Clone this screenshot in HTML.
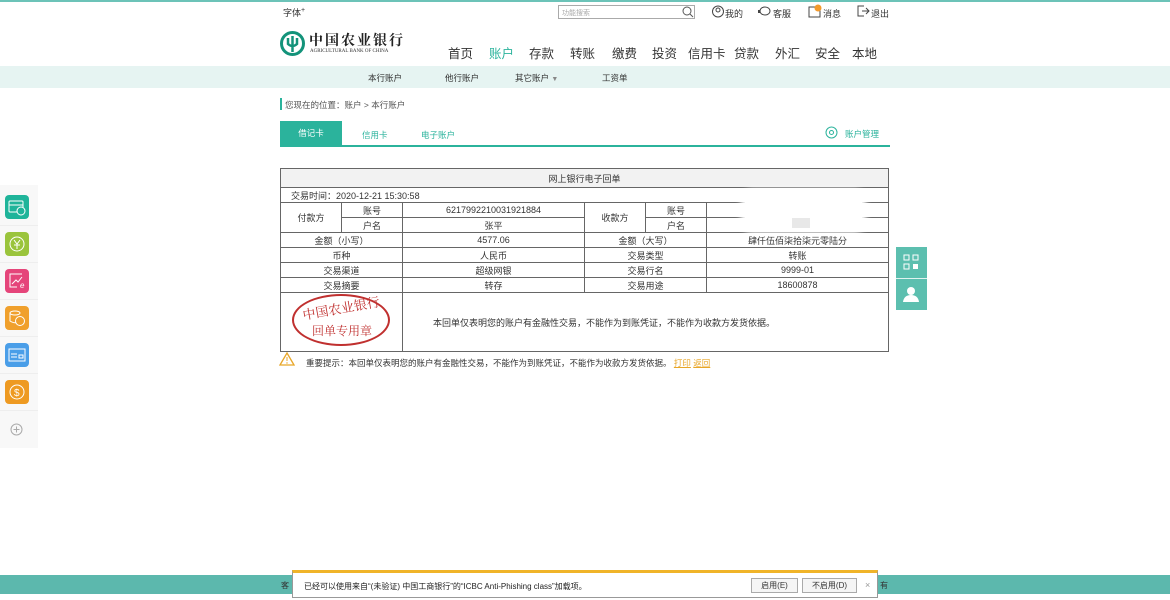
<!DOCTYPE html>
<html><head><meta charset="utf-8"><style>
*{margin:0;padding:0;box-sizing:border-box}
body{width:1170px;height:600px;position:relative;background:#fff;font-family:"Liberation Sans","Noto Sans CJK SC",sans-serif;color:#333;overflow:hidden;font-size:9px}
.a{position:absolute;white-space:nowrap}
table{position:absolute;left:280px;top:168px;width:609px;border-collapse:collapse;font-size:9px}
td{border:1px solid #666;text-align:center;height:15px;padding:0}
.nav span{position:absolute;top:43px;font-size:12.5px;color:#333}
.sub span{position:absolute;top:72px;font-size:8.5px;color:#333}
.side{position:absolute;left:5px;width:24px;height:24px;border-radius:4px}
.side svg{position:absolute;left:3px;top:3px}
.sep{position:absolute;left:0;width:38px;height:1px;background:#eee}
</style></head><body>
<div class="a" style="left:0;top:0;width:1170px;height:2px;background:#6cc3b8"></div>
<div class="a" style="left:283px;top:6px;font-size:9px">字体<sup style="font-size:7px">+</sup></div>
<div class="a" style="left:558px;top:5px;width:137px;height:14px;border:1px solid #aaa;font-size:7px;color:#aaa;padding:2px 3px">功能搜索</div>
<svg class="a" style="left:682px;top:6px" width="12" height="12"><circle cx="5" cy="5" r="4" fill="none" stroke="#555"/><line x1="8" y1="8" x2="11" y2="11" stroke="#555"/></svg>
<svg class="a" style="left:712px;top:5px" width="12" height="13"><circle cx="6" cy="6.5" r="5.5" fill="none" stroke="#444"/><circle cx="6" cy="5" r="2" fill="none" stroke="#444"/></svg>
<div class="a" style="left:725px;top:7px;font-size:9px">我的</div>
<svg class="a" style="left:758px;top:6px" width="14" height="11"><ellipse cx="7" cy="5" rx="5" ry="4" fill="none" stroke="#444"/><rect x="0" y="4" width="2" height="3" fill="#444"/></svg>
<div class="a" style="left:773px;top:7px;font-size:9px">客服</div>
<svg class="a" style="left:808px;top:4px" width="14" height="14"><rect x="1" y="3" width="11" height="10" fill="none" stroke="#444"/><circle cx="10" cy="4" r="3.5" fill="#f39a2c"/></svg>
<div class="a" style="left:823px;top:7px;font-size:9px">消息</div>
<svg class="a" style="left:857px;top:5px" width="13" height="12"><path d="M7 1H1V11H7M5 6H12M9 3L12 6L9 9" fill="none" stroke="#444"/></svg>
<div class="a" style="left:871px;top:7px;font-size:9px">退出</div>
<svg class="a" style="left:280px;top:31px" width="25" height="25"><circle cx="12.5" cy="12.5" r="11" fill="none" stroke="#13937a" stroke-width="3"/><path d="M12.5 5V21M8 7V13Q12.5 17 17 13V7" fill="none" stroke="#13937a" stroke-width="2.5"/></svg>
<div class="a" style="left:309px;top:30px;font-size:14px;font-weight:bold;font-family:'Noto Serif CJK SC',serif;color:#222;letter-spacing:2px">中国农业银行</div>
<div class="a" style="left:310px;top:49px;font-size:5px;font-family:'Liberation Serif',serif;color:#333">AGRICULTURAL BANK OF CHINA</div>
<div class="nav"><span style="left:448px">首页</span><span style="left:489px;color:#2bb39c">账户</span><span style="left:529px">存款</span><span style="left:570px">转账</span><span style="left:612px">缴费</span><span style="left:652px">投资</span><span style="left:688px">信用卡</span><span style="left:734px">贷款</span><span style="left:775px">外汇</span><span style="left:815px">安全</span><span style="left:852px">本地</span></div>
<div class="a" style="left:0;top:66px;width:1170px;height:22px;background:#e6f4f2"></div>
<div class="sub"><span style="left:368px">本行账户</span><span style="left:445px">他行账户</span><span style="left:515px">其它账户 <span style="color:#888;font-size:7px;position:static">▼</span></span><span style="left:602px">工资单</span></div>
<div class="a" style="left:280px;top:98px;width:2px;height:12px;background:#2bb39c"></div>
<div class="a" style="left:285px;top:99px;font-size:8.5px;color:#555">您现在的位置：账户 &gt; 本行账户</div>
<div class="a" style="left:280px;top:121px;width:62px;height:24px;background:#2bb39c;color:#fff;font-size:8.5px;text-align:center;line-height:24px">借记卡</div>
<div class="a" style="left:362px;top:129px;font-size:8.5px;color:#2bb39c">信用卡</div>
<div class="a" style="left:421px;top:129px;font-size:8.5px;color:#2bb39c">电子账户</div>
<svg class="a" style="left:825px;top:126px" width="13" height="13"><circle cx="6.5" cy="6.5" r="5.5" fill="none" stroke="#2bb39c"/><circle cx="6.5" cy="6.5" r="2" fill="none" stroke="#2bb39c"/></svg>
<div class="a" style="left:845px;top:128px;font-size:8.5px;color:#2bb39c">账户管理</div>
<div class="a" style="left:280px;top:145px;width:610px;height:2px;background:#2bb39c"></div>
<table>
<tr><td colspan="6" style="background:#f2f2f2;height:19px">网上银行电子回单</td></tr>
<tr><td colspan="6" style="text-align:left;padding-left:10px">交易时间：2020-12-21 15:30:58</td></tr>
<tr><td rowspan="2" style="width:61px">付款方</td><td style="width:61px;height:14px">账号</td><td style="width:182px">6217992210031921884</td><td rowspan="2" style="width:61px">收款方</td><td style="width:61px">账号</td><td></td></tr>
<tr><td style="height:14px">户名</td><td>张平</td><td>户名</td><td></td></tr>
<tr><td colspan="2">金额（小写）</td><td>4577.06</td><td colspan="2">金额（大写）</td><td>肆仟伍佰柒拾柒元零陆分</td></tr>
<tr><td colspan="2">币种</td><td>人民币</td><td colspan="2">交易类型</td><td>转账</td></tr>
<tr><td colspan="2">交易渠道</td><td>超级网银</td><td colspan="2">交易行名</td><td>9999-01</td></tr>
<tr><td colspan="2">交易摘要</td><td>转存</td><td colspan="2">交易用途</td><td>18600878</td></tr>
<tr><td colspan="2" style="height:59px;position:relative"></td><td colspan="4" style="text-align:left;padding-left:30px">本回单仅表明您的账户有金融性交易，不能作为到账凭证，不能作为收款方发货依据。</td></tr>
</table>
<div class="a" style="left:745px;top:193px;width:117px;height:36px;background:#fff;border-radius:8px;box-shadow:0 0 6px 4px #fff"></div>
<div class="a" style="left:792px;top:218px;width:18px;height:10px;background:#e8e8e8"></div>
<div class="a" style="left:292px;top:294px;width:98px;height:52px;border:2px solid #c0302f;border-radius:50%"></div>
<div class="a" style="left:302px;top:298px;font-size:13px;color:#c0302f;font-family:'Noto Serif CJK SC',serif;transform:rotate(-10deg)">中国农业银行</div>
<div class="a" style="left:312px;top:322px;font-size:12px;color:#c0302f;font-family:'Noto Serif CJK SC',serif">回单专用章</div>
<svg class="a" style="left:279px;top:352px" width="16" height="14"><path d="M8 1L15 13H1Z" fill="none" stroke="#e8a628" stroke-width="1.3"/><line x1="8" y1="5" x2="8" y2="9" stroke="#e8a628"/><circle cx="8" cy="11" r=".7" fill="#e8a628"/></svg>
<div class="a" style="left:306px;top:357px;font-size:8.5px;color:#333">重要提示：本回单仅表明您的账户有金融性交易，不能作为到账凭证，不能作为收款方发货依据。 <span style="color:#e8a628;text-decoration:underline">打印</span> <span style="color:#e8a628;text-decoration:underline">返回</span></div>
<div class="a" style="left:0;top:185px;width:38px;height:263px;background:#f8f8f8"></div>
<div class="side" style="top:195px;background:#1fb49a"><svg width="18" height="18"><rect x="1" y="3" width="14" height="11" rx="1" fill="none" stroke="#fff"/><line x1="1" y1="7" x2="15" y2="7" stroke="#fff"/><circle cx="13" cy="13" r="4" fill="#1fb49a" stroke="#fff"/></svg></div>
<div class="sep" style="top:225px"></div>
<div class="side" style="top:232px;background:#9ac43c"><svg width="18" height="18"><circle cx="9" cy="9" r="7" fill="none" stroke="#fff"/><path d="M6 5L9 9L12 5M9 9V14M6 10H12" fill="none" stroke="#fff"/></svg></div>
<div class="sep" style="top:262px"></div>
<div class="side" style="top:269px;background:#e5457a"><svg width="18" height="18"><path d="M14 2H2V15H9" fill="none" stroke="#fff"/><path d="M4 12L8 8L10 10L14 5" fill="none" stroke="#fff"/><text x="12" y="16" font-size="8" fill="#fff" font-style="italic">e</text></svg></div>
<div class="sep" style="top:299px"></div>
<div class="side" style="top:306px;background:#f0a02c"><svg width="18" height="18"><ellipse cx="7" cy="4" rx="5" ry="2" fill="none" stroke="#fff"/><path d="M2 4V12Q7 15 9 13" fill="none" stroke="#fff"/><circle cx="12" cy="12" r="4.5" fill="#f0a02c" stroke="#fff"/></svg></div>
<div class="sep" style="top:336px"></div>
<div class="side" style="top:343px;background:#4a9ee8"><svg width="18" height="18"><rect x="1" y="3" width="16" height="12" fill="none" stroke="#fff"/><line x1="3" y1="8" x2="9" y2="8" stroke="#fff"/><line x1="3" y1="11" x2="9" y2="11" stroke="#fff"/><rect x="11" y="9" width="4" height="3" fill="none" stroke="#fff"/></svg></div>
<div class="sep" style="top:373px"></div>
<div class="side" style="top:380px;background:#ee9a22"><svg width="18" height="18"><circle cx="9" cy="9" r="7" fill="none" stroke="#fff"/><text x="6" y="13" font-size="10" fill="#fff">$</text></svg></div>
<div class="sep" style="top:410px"></div>
<svg class="a" style="left:10px;top:423px" width="13" height="13"><circle cx="6.5" cy="6.5" r="5.5" fill="none" stroke="#aaa"/><path d="M6.5 3.5V9.5M3.5 6.5H9.5" stroke="#aaa"/></svg>
<div class="a" style="left:896px;top:247px;width:31px;height:63px;background:#5cbfaf"></div>
<div class="a" style="left:896px;top:278px;width:31px;height:1px;background:#e0f3f0"></div>
<svg class="a" style="left:903px;top:254px" width="16" height="16"><rect x="1" y="1" width="5" height="5" fill="none" stroke="#fff"/><rect x="10" y="1" width="5" height="5" fill="none" stroke="#fff"/><rect x="1" y="10" width="5" height="5" fill="none" stroke="#fff"/><rect x="10" y="10" width="5" height="5" fill="#fff"/></svg>
<svg class="a" style="left:902px;top:285px" width="18" height="17"><circle cx="9" cy="6" r="4" fill="#fff"/><path d="M1 17Q2 10 9 10Q16 10 17 17Z" fill="#fff"/></svg>
<div class="a" style="left:0;top:575px;width:1170px;height:19px;background:#5cb8ad"></div>
<div class="a" style="left:281px;top:580px;font-size:8px;color:#333">客</div>
<div class="a" style="left:880px;top:580px;font-size:8px;color:#333">有</div>
<div class="a" style="left:292px;top:570px;width:586px;height:28px;background:#fff;border:1px solid #999;border-top:3px solid #f0b429"></div>
<div class="a" style="left:304px;top:581px;font-size:8px;color:#222">已经可以使用来自“(未验证) 中国工商银行”的“ICBC Anti-Phishing class”加载项。</div>
<div class="a" style="left:751px;top:578px;width:47px;height:15px;border:1px solid #aaa;background:#f5f5f5;font-size:8px;text-align:center;line-height:13px">启用(E)</div>
<div class="a" style="left:802px;top:578px;width:55px;height:15px;border:1px solid #aaa;background:#f5f5f5;font-size:8px;text-align:center;line-height:13px">不启用(D)</div>
<div class="a" style="left:865px;top:580px;font-size:9px;color:#999">×</div>
</body></html>
